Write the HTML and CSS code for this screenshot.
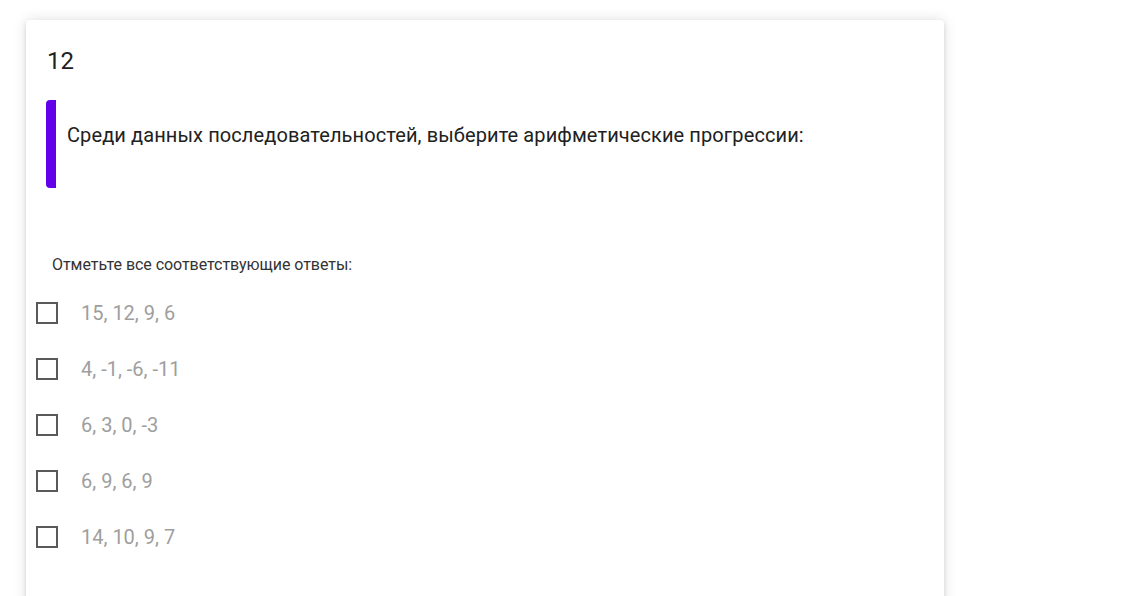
FILE: index.html
```html
<!DOCTYPE html>
<html lang="ru">
<head>
<meta charset="utf-8">
<title>Вопрос 12</title>
<link rel="stylesheet" href="styles.css">
</head>
<body>
<div class="card">
  <div class="num">12</div>
  <div class="question">
    <p>Среди данных последовательностей, выберите арифметические прогрессии:</p>
  </div>
  <div class="hint">Отметьте все соответствующие ответы:</div>
  <ul class="options">
    <li class="option"><span class="box"></span><span class="label">15, 12, 9, 6</span></li>
    <li class="option"><span class="box"></span><span class="label">4, -1, -6, -11</span></li>
    <li class="option"><span class="box"></span><span class="label">6, 3, 0, -3</span></li>
    <li class="option"><span class="box"></span><span class="label">6, 9, 6, 9</span></li>
    <li class="option"><span class="box"></span><span class="label">14, 10, 9, 7</span></li>
  </ul>
</div>
</body>
</html>
```

FILE: styles.css
```css
html, body {
  margin: 0;
  padding: 0;
  background: #ffffff;
}
body {
  font-family: Roboto, "Liberation Sans", sans-serif;
  padding: 20px 0 0 26px;
  overflow: hidden;
}
.card {
  width: 918px;
  min-height: 640px;
  box-sizing: border-box;
  background: #fff;
  border-radius: 4px;
  box-shadow: 0 2px 4px rgba(0,0,0,0.12), 0 0 14px rgba(0,0,0,0.12);
  padding: 25px 20px 0 20px;
}
.num {
  font-size: 24px;
  line-height: 32px;
  color: #212121;
  padding-left: 1px;
}
.question {
  margin-top: 23px;
  height: 88px;
  box-sizing: border-box;
  border-left: 10px solid #6200ea;
  border-radius: 4px;
  padding: 21px 0 0 11px;
}
.question p {
  margin: 0;
  font-size: 20px;
  line-height: 28px;
  letter-spacing: 0.1px;
  color: #212121;
}
.hint {
  margin-top: 67px;
  padding-left: 6px;
  font-size: 16px;
  line-height: 20px;
  letter-spacing: -0.05px;
  color: #333333;
}
.options {
  list-style: none;
  margin: 10px 0 0 -10px;
  padding: 0;
}
.option {
  display: flex;
  align-items: center;
  height: 56px;
}
.box {
  width: 22px;
  height: 22px;
  box-sizing: border-box;
  border: 2px solid #5a5a5a;
  flex: none;
}
.label {
  margin-left: 23px;
  font-size: 20px;
  color: #9e9e9e;
}
```
